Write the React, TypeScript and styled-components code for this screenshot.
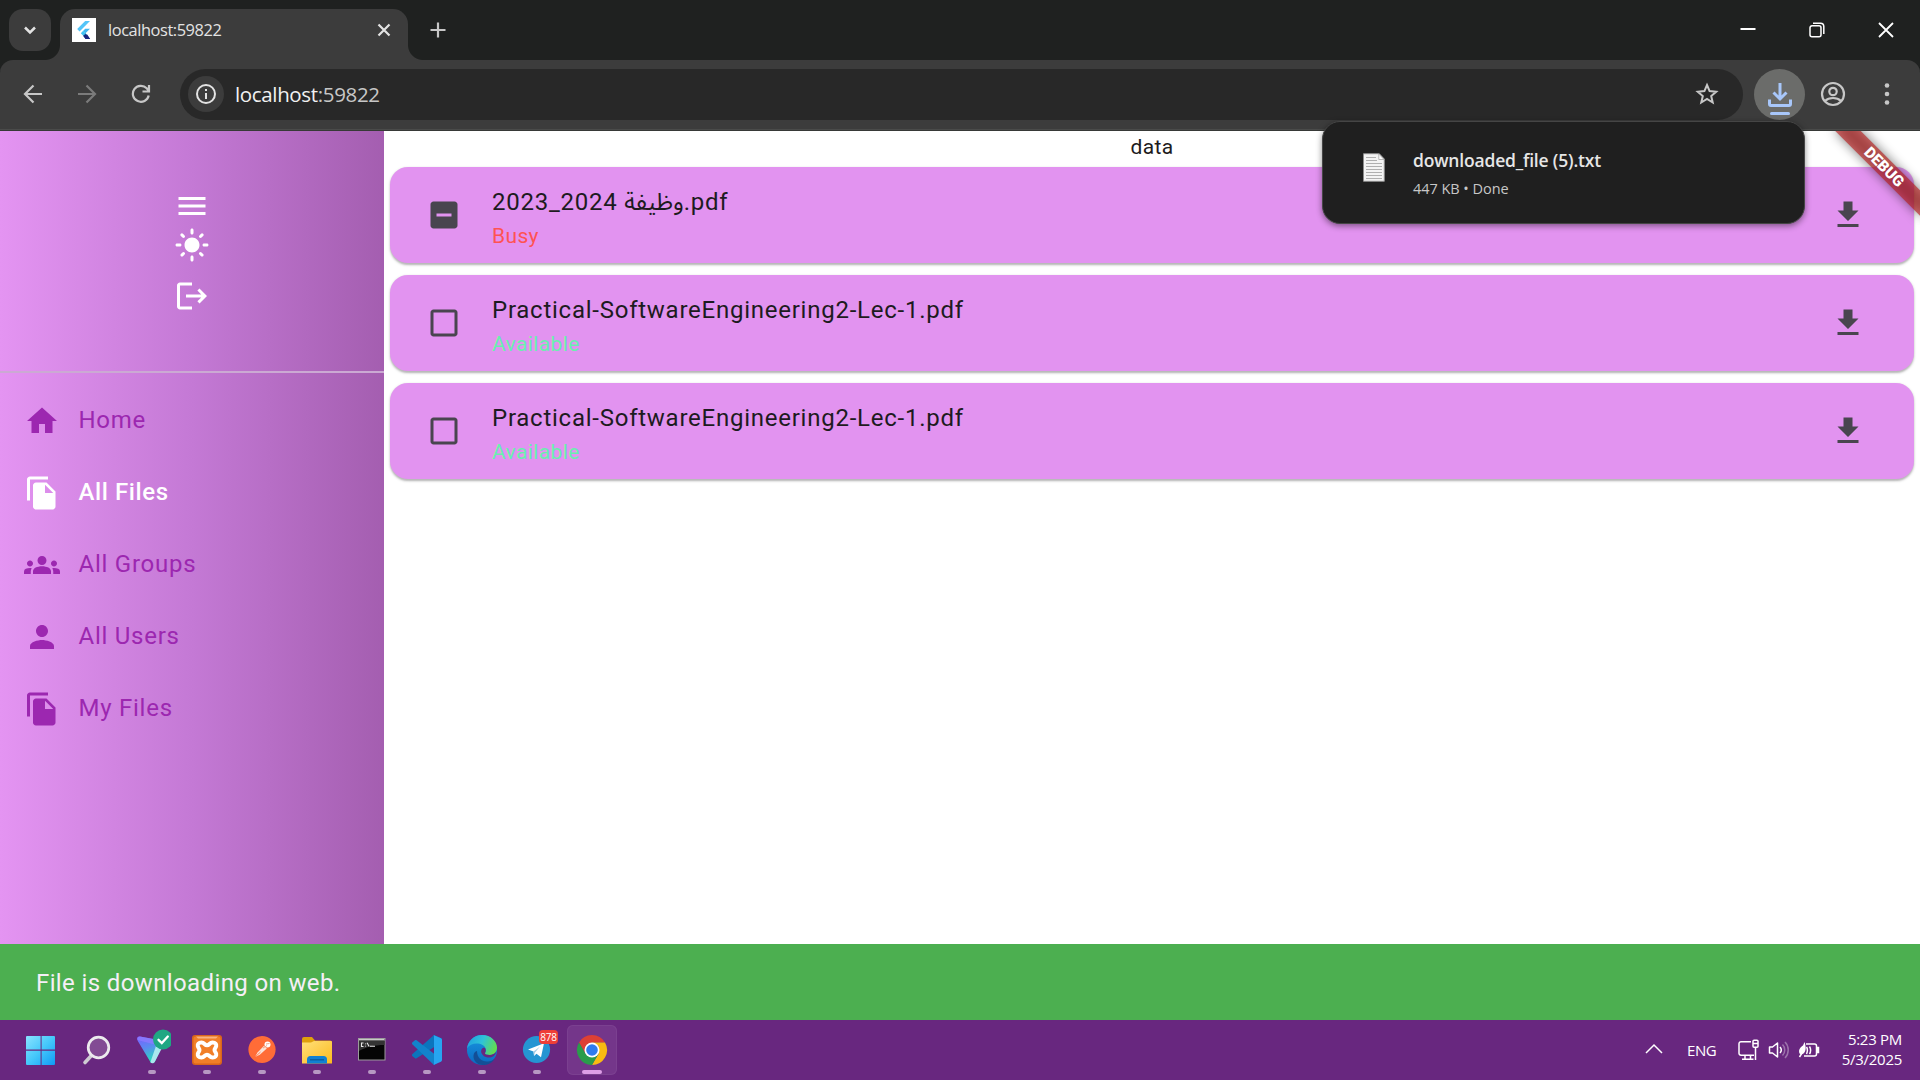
import React from "react";
import styled, { createGlobalStyle, css } from "styled-components";
import {
  MdHome,
  MdFileCopy,
  MdGroups,
  MdPerson,
  MdMenu,
  MdLightMode,
  MdLogout,
  MdCheckBoxOutlineBlank,
  MdIndeterminateCheckBox,
  MdFileDownload,
} from "react-icons/md";

const SYSTEM = `"Open Sans", "Noto Sans", sans-serif`;
const APP = `Roboto, "Noto Sans Arabic", "DejaVu Sans", sans-serif`;

const Global = createGlobalStyle`
  *, *::before, *::after { box-sizing: border-box; }
  html, body { margin: 0; padding: 0; overflow: hidden; }
  svg { display: block; flex: none; }
`;

const Screen = styled.div`
  display: flex;
  flex-direction: column;
  width: 1920px;
  height: 1080px;
  overflow: hidden;
  position: relative;
  background: #fff;
`;

/* ---------- browser chrome ---------- */

const TabStrip = styled.div`
  display: flex;
  height: 60px;
  flex: none;
  padding: 9px 0 0 9px;
  background: #1f2120;
`;

const TabSearch = styled.div`
  display: grid;
  place-items: center;
  width: 42px;
  height: 42px;
  border-radius: 14px;
  background: #3c3c3c;
`;

const Tab = styled.div`
  position: relative;
  display: flex;
  align-items: center;
  width: 348px;
  height: 51px;
  margin-left: 9px;
  padding: 0 15px 9px 12px;
  border-radius: 15px 15px 0 0;
  background: #3c3c3c;

  &::before,
  &::after {
    content: "";
    position: absolute;
    bottom: 0;
    width: 15px;
    height: 15px;
  }
  &::before {
    left: -15px;
    background: radial-gradient(circle at 0 0, transparent 14.5px, #3c3c3c 15.5px);
  }
  &::after {
    right: -15px;
    background: radial-gradient(circle at 100% 0, transparent 14.5px, #3c3c3c 15.5px);
  }
`;

const TabTitle = styled.span`
  flex: 1;
  margin-left: 12px;
  font: 400 16.4px/24px ${SYSTEM};
  letter-spacing: -0.43px;
  color: #e3e3e3;
`;

const NewTab = styled.div`
  display: grid;
  place-items: center;
  width: 42px;
  height: 42px;
  margin-left: 9px;
`;

const WindowButtons = styled.div`
  display: flex;
  height: 42px;
  margin-left: auto;
`;

const WindowButton = styled.div`
  display: grid;
  place-items: center;
  width: 69px;
  height: 42px;
`;

const ToolbarBack = styled.div`
  flex: none;
  height: 71px;
  background: #1f2120;
`;

const Toolbar = styled.div`
  display: flex;
  align-items: center;
  height: 71px;
  padding: 0 6px 2px 6px;
  border-radius: 13px 13px 0 0;
  border-bottom: 1px solid #373937;
  box-shadow: inset 0 -1px 0 #4a4b4a;
  background: #3c3c3c;
`;

const ToolButton = styled.div`
  display: grid;
  place-items: center;
  width: 54px;
  height: 51px;
`;

const AddressBar = styled.div`
  display: flex;
  align-items: center;
  width: 1563px;
  height: 51px;
  margin-left: 12px;
  padding: 0 24px 0 7.5px;
  border-radius: 26px;
  background: #282828;
`;

const SiteInfo = styled.div`
  display: grid;
  place-items: center;
  width: 36px;
  height: 36px;
  border-radius: 50%;
  background: #3c3c3c;
`;

const Url = styled.span`
  flex: 1;
  margin-left: 11.5px;
  font: 400 20.5px/30px ${SYSTEM};
  letter-spacing: -0.35px;
  color: #c7c7c7;
`;

const Host = styled.span`
  color: #f1f1f1;
`;

const DownloadsButton = styled.div`
  display: grid;
  place-items: center;
  width: 51px;
  height: 51px;
  margin: 0 1px 0 11px;
  border-radius: 50%;
  background: #6b6c6a;
`;

/* ---------- download bubble ---------- */

const Bubble = styled.div`
  position: absolute;
  left: 1322px;
  top: 121px;
  display: flex;
  align-items: flex-start;
  width: 483px;
  height: 103px;
  padding: 31px 39px 0;
  border: 1px solid #454545;
  border-radius: 18px;
  background: #1f1f1f;
  box-shadow: 0 2px 6px rgba(0, 0, 0, 0.45);
`;

const BubbleText = styled.div`
  display: flex;
  flex-direction: column;
  margin: -7px 0 0 27px;
  font-family: ${SYSTEM};
`;

const BubbleTitle = styled.div`
  font-size: 17.5px;
  font-weight: 600;
  line-height: 28px;
  letter-spacing: -0.18px;
  color: #e6e6e6;
`;

const BubbleMeta = styled.div`
  font-size: 14.5px;
  line-height: 29px;
  letter-spacing: -0.04px;
  color: #c7c7c7;
`;

/* ---------- page ---------- */

const Page = styled.div`
  position: relative;
  display: flex;
  height: 813px;
  flex: none;
  overflow: hidden;
  font-family: ${APP};
`;

const Sidebar = styled.aside`
  display: flex;
  flex-direction: column;
  width: 384px;
  flex: none;
  background: linear-gradient(90deg, #e494f2 0%, #c479d5 50%, #a45eb0 100%);
`;

const SidebarHeader = styled.div`
  display: flex;
  flex-direction: column;
  align-items: center;
  height: 242px;
  padding-top: 57px;
  border-bottom: 2px solid #cba9d3;
  color: #fff;
`;

const HeaderIcon = styled.div<{ $h: number }>`
  display: grid;
  place-items: center;
  width: 60px;
  height: ${(p) => p.$h}px;
  font-size: 36px;
`;

const NavList = styled.nav`
  display: flex;
  flex-direction: column;
  padding-top: 11px;
`;

const NavItem = styled.div<{ $active?: boolean }>`
  display: flex;
  align-items: center;
  gap: 18.5px;
  height: 72px;
  padding-left: 24px;
  font-size: 24px;
  letter-spacing: 0.75px;
  color: #9c27b0;
  ${(p) =>
    p.$active &&
    css`
      color: #fff;
      font-weight: 500;
      letter-spacing: 0.6px;
    `}
  svg {
    width: 36px;
    height: 36px;
    margin-top: 2px;
  }
`;

const Main = styled.main`
  display: flex;
  flex-direction: column;
  flex: 1;
  padding: 0 6px;
`;

const Caption = styled.div`
  height: 30px;
  font-size: 21px;
  line-height: 32px;
  letter-spacing: 0.375px;
  text-align: center;
  color: #1d1b20;
`;

const FileCard = styled.div`
  display: flex;
  align-items: center;
  height: 96px;
  margin: 6px 0;
  padding: 0 48px 0 36px;
  border-radius: 18px;
  background: #e293f0;
  box-shadow: 0 1.5px 3px rgba(0, 0, 0, 0.2), 0 1.5px 1.5px rgba(0, 0, 0, 0.12);
  color: #49454f;
  font-size: 36px;
`;

const FileText = styled.div`
  flex: 1;
  margin-left: 30px;
`;

const FileName = styled.div`
  height: 36px;
  font-size: 24px;
  line-height: 40px;
  letter-spacing: 0.75px;
  color: #1d1b20;
`;

/* Shaped apart from the Arabic word, which would otherwise cancel the letter spacing. */
const LatinPart = styled.span`
  display: inline-block;
  white-space: pre;
`;

const FileStatus = styled.div<{ $busy: boolean }>`
  height: 30px;
  font-size: 21px;
  line-height: 36px;
  letter-spacing: 0.375px;
  color: ${(p) => (p.$busy ? "#ff5252" : "#69f0ae")};
`;

const Banner = styled.div`
  position: absolute;
  right: -24px;
  top: 27px;
  width: 120px;
  height: 18px;
  transform: rotate(45deg);
  font: 900 15.3px/18px Roboto, sans-serif;
  text-align: center;
  color: #fff;

  &::before {
    content: "";
    position: absolute;
    inset: 0;
    background: rgba(0, 0, 0, 0.5);
    filter: blur(6px);
  }
`;

const BannerLabel = styled.span`
  position: absolute;
  inset: 0;
  background: rgba(183, 28, 28, 0.63);
`;

const SnackBar = styled.div`
  display: flex;
  align-items: center;
  flex: none;
  height: 76px;
  padding: 2px 36px 0;
  background: #4caf50;
  font: 400 24px/36px ${APP};
  letter-spacing: 0.375px;
  color: #f5eff7;
`;

/* ---------- taskbar ---------- */

const Taskbar = styled.div`
  display: flex;
  flex: none;
  height: 60px;
  padding: 5px 18px 5px 17px;
  background: #68277f;
  color: #fff;
  font-family: ${SYSTEM};
`;

const Slot = styled.div<{ $active?: boolean }>`
  position: relative;
  display: flex;
  flex-direction: column;
  align-items: center;
  width: 50px;
  height: 50px;
  margin-right: 5px;
  padding-top: 9px;
  border-radius: 6px;
  ${(p) =>
    p.$active &&
    css`
      background: #74368a;
      box-shadow: inset 0 0 0 1px #7b4090;
    `}
`;

const Running = styled.i<{ $active?: boolean }>`
  width: ${(p) => (p.$active ? 20 : 8)}px;
  height: 4px;
  margin-top: 4px;
  border-radius: 2px;
  background: ${(p) => (p.$active ? "#dd9de6" : "#b798c3")};
`;

const Badge = styled.span`
  position: absolute;
  left: 27px;
  top: 5px;
  width: 19px;
  height: 14px;
  border-radius: 4px;
  background: #ee3e37;
  font-size: 10px;
  line-height: 14px;
  letter-spacing: -0.2px;
  text-align: center;
`;

const Tray = styled.div`
  display: flex;
  align-items: center;
  height: 48px;
  margin-left: auto;
  font-size: 15px;
  letter-spacing: -0.28px;
`;

const Language = styled.span`
  width: 30px;
  margin: 1px 21px 0 24px;
  letter-spacing: -0.4px;
`;

const TrayIcons = styled.div`
  display: flex;
  align-items: center;
  gap: 8px;
  margin-top: 2px;
`;

const Clock = styled.div`
  display: flex;
  flex-direction: column;
  align-items: flex-end;
  width: 82px;
  line-height: 20px;
`;

/* ---------- drawings ---------- */

type StrokeProps = { size: number; d: string; color: string; w: number };

const Stroke = ({ size, d, color, w }: StrokeProps) => (
  <svg width={size} height={size} viewBox={`0 0 ${size} ${size}`} fill="none" stroke={color} strokeWidth={w}>
    <path d={d} />
  </svg>
);

const FlutterIcon = () => (
  <svg width="24" height="24" viewBox="0 0 24 24">
    <path fill="#fff" d="M0 0h24v24H0z" />
    <path fill="#54c5f8" d="M13.2 3H18L7.6 13.4 5.2 11z" />
    <path fill="#42b8f0" d="M13.2 10.8H18l-4.5 4.5-2.4-2.4z" />
    <path fill="#40c4f5" d="M8.8 15.2l2.4-2.4 2.4 2.4-2.4 2.5z" />
    <path fill="#01579b" d="M11.2 17.7l2.4-2.5 4.5 5.8h-4.5z" />
    <path fill="#1a237e" d="M11.2 17.7l4-1.2 2.9 4.5h-4.5z" />
  </svg>
);

const PaperIcon = () => (
  <svg width="24" height="29" viewBox="0 0 24 29">
    <path d="M1.500.7h15.800l5 5.300v22.300H1.500z" fill="#f4f4f4" stroke="#8d8d8d" />
    <path d="M16.800 1v5.500h5.200z" fill="#fff" stroke="#a8a8a8" strokeWidth=".8" />
    <path
      d="M4 4.500h10M4 7.500h11M4 10.500h16M4 13.500h16M4 16.500h16M4 19.500h16M4 22.500h16M4 25.500h16"
      stroke="#b0b0b0"
      strokeWidth="1.200"
    />
  </svg>
);

const StartIcon = () => (
  <svg width="32" height="32" viewBox="0 0 32 32">
    <defs>
      <linearGradient id="win" x1="0" y1="0" x2="1" y2="1" gradientUnits="objectBoundingBox">
        <stop offset="0" stopColor="#8be3ff" />
        <stop offset=".5" stopColor="#45c8fb" />
        <stop offset="1" stopColor="#0f9bf5" />
      </linearGradient>
    </defs>
    <path
      fill="url(#win)"
      d="M1 2h13.6v13.6H0V3a1 1 0 0 1 1-1zM15.6 2H28a1 1 0 0 1 1 1v12.6H15.6zM0 16.8h14.6V31H1a1 1 0 0 1-1-1zM15.6 16.8H29V30a1 1 0 0 1-1 1H15.6z"
    />
  </svg>
);

const SearchIcon = () => (
  <svg width="32" height="32" viewBox="0 0 32 32" fill="none" strokeLinecap="round">
    <path d="M10 22l-6 6.5" stroke="#cfcbd3" strokeWidth="3.6" />
    <circle cx="17.5" cy="13.5" r="10.3" fill="#824b94" stroke="#eceaee" strokeWidth="2.7" />
  </svg>
);

const ProtonSvg = styled.svg`
  margin-top: -6px;
`;

const ProtonIcon = () => (
  <ProtonSvg width="38" height="38" viewBox="0 0 38 38">
    <defs>
      <linearGradient id="pv" x1="0" y1="0" x2=".4" y2="1">
        <stop offset="0" stopColor="#7b5cff" />
        <stop offset=".5" stopColor="#5a8cf0" />
        <stop offset="1" stopColor="#25e0b8" />
      </linearGradient>
    </defs>
    <path
      fill="url(#pv)"
      d="M4.200 10.500C4.200 9 5.500 8.200 7 8.500l19 3.500 3.500 4.500-7.600 17c-1 2-3.700 2-4.800 0L4.800 13c-.4-.8-.6-1.600-.6-2.500z"
    />
    <path fill="#8d7bff" d="M4.500 12C3.800 9.500 5.200 8.200 7 8.500l17 3.200-3 4.500z" opacity=".8" />
    <path fill="#a9e8ee" d="M24 15l6 3-8 15.500c-1 2-3.300 2.300-4.600.8z" />
    <circle cx="30" cy="11.500" r="10" fill="#1fa783" />
    <path d="M25.500 11.800l3.300 3.200 6-6.500" fill="none" stroke="#fff" strokeWidth="2.300" strokeLinecap="round" />
  </ProtonSvg>
);

const XamppIcon = () => (
  <svg width="32" height="32" viewBox="0 0 32 32">
    <rect x="1" y="1" width="30" height="30" rx="3" fill="#d9651b" />
    <rect x="2.500" y="2.500" width="27" height="27" rx="2" fill="#f17f28" />
    <path d="M5 2.500h22l-2 2H7z" fill="#f8b380" />
    <path
      d="M10.500 8.500c-3 0-4 1.500-3.700 3.500.2 1.500 1.700 2.300 1.700 4s-1.500 2.500-1.700 4c-.3 2 .7 3.500 3.700 3.500s3-2.800 5.500-2.800 2.500 2.800 5.500 2.800 4-1.500 3.700-3.500c-.2-1.500-1.700-2.300-1.700-4s1.500-2.500 1.700-4c.3-2-.7-3.500-3.700-3.500s-3 2.800-5.500 2.800-2.500-2.800-5.500-2.800z"
      fill="none"
      stroke="#fff"
      strokeWidth="4"
    />
  </svg>
);

const PostmanIcon = () => (
  <svg width="32" height="32" viewBox="0 0 32 32">
    <circle cx="16" cy="15.500" r="13.600" fill="#ff6c37" />
    <path d="M9 23l2.500-4.500 6.500-6.700 2.800 2.700-7 6.300z" fill="#fbe3d8" />
    <path d="M8.500 23.500l6-5.500" stroke="#ff6c37" strokeWidth=".8" />
    <circle cx="21.500" cy="10.500" r="3" fill="#fff" />
    <path d="M20 10l3.500-.5M17 14l4-2.500" stroke="#e9926e" strokeWidth=".8" />
  </svg>
);

const ExplorerIcon = () => (
  <svg width="32" height="32" viewBox="0 0 32 32">
    <defs>
      <linearGradient id="fold" x1="0" y1="0" x2="1" y2="1">
        <stop offset="0" stopColor="#ffe07a" />
        <stop offset="1" stopColor="#fdbb1e" />
      </linearGradient>
    </defs>
    <path d="M1 5a2 2 0 0 1 2-2h8l3 3.500h15a2 2 0 0 1 2 2V16H1z" fill="#dfa00c" />
    <path d="M1 8.500h9l3-1.500h17a1 1 0 0 1 1 1v21.500H1z" fill="url(#fold)" />
    <path d="M6 29.500v-4a3.500 3.500 0 0 1 3.500-3.500h13a3.500 3.500 0 0 1 3.500 3.500v4z" fill="#1181d2" />
    <path d="M9 25.800h14" stroke="#0b5a9c" strokeWidth="1.300" />
  </svg>
);

const TerminalIcon = () => (
  <svg width="32" height="32" viewBox="0 0 32 32">
    <rect x="2.500" y="4.500" width="26.500" height="21.500" fill="#050505" stroke="#9b9b9b" />
    <path d="M3 5h25.500v1.500H3z" fill="#c9c9c9" />
    <path d="M3 7h25.500v4C18 11 10 13 3 17z" fill="#333" />
    <path
      d="M7.500 9H5.500v3.500h2M9.500 9.500v.8M9.500 11.700v.8M11 8.800l2.200 3.700M14 12.300h5"
      fill="none"
      stroke="#e8e8e8"
      strokeWidth="1.100"
    />
  </svg>
);

const CodeIcon = () => (
  <svg width="32" height="32" viewBox="0 0 32 32">
    <path d="M23 1L31 4.500V8L4.800 24.800 1.500 22.200c-.7-.6-.7-1.600 0-2.200z" fill="#0b75bd" />
    <path d="M23 31l-21.500-20.500c-.7-.6-.7-1.600 0-2.200L4 6.300c.5-.4 1.100-.4 1.600 0L26 22v7z" fill="#1283cb" />
    <path
      d="M22.500 1l7.400 3.200c.7.3 1.100.9 1.100 1.700v20.200c0 .8-.4 1.400-1.100 1.700L22.500 31c.3-.3.5-.8.5-1.500V2.500c0-.7-.2-1.200-.5-1.500z"
      fill="#27a5f0"
    />
  </svg>
);

const EdgeIcon = () => (
  <svg width="32" height="32" viewBox="0 0 32 32">
    <defs>
      <linearGradient id="edgeTop" x1="0" y1=".2" x2="1" y2=".5">
        <stop offset="0" stopColor="#1f9fe0" />
        <stop offset=".5" stopColor="#2fc3d8" />
        <stop offset="1" stopColor="#62dc50" />
      </linearGradient>
      <linearGradient id="edgeLow" x1="0" y1="0" x2="0" y2="1">
        <stop offset="0" stopColor="#1896e0" />
        <stop offset="1" stopColor="#0c69c0" />
      </linearGradient>
    </defs>
    <circle cx="16" cy="16" r="15" fill="url(#edgeLow)" />
    <path
      d="M11 17c0 7 5 11 11 10.500 2.500-.2 4.600-1 6.500-2.500C26 29 21.500 31 17 31c-6 0-10-5-9.500-9.500.3-2.500 1.500-4 3.500-4.500z"
      fill="#134f96"
    />
    <path
      d="M1 14.500C1.800 7 8 1 16 1c9 0 15 6.500 15 12.500 0 5-3.500 7.500-7.500 7.500-3 0-5-1-4.500-2 1.800-2 1.300-6-2.500-8C12 8.500 4 9 1 14.500z"
      fill="url(#edgeTop)"
    />
    <path
      d="M19 19c-.5 1 1.500 2 4.500 2 3 0 5.500-1.200 6.800-3.500-1 5-5 6.500-8.800 6-4.500-.7-7.500-5-6-8 .8-1.500 2-2 3.500-1.500 1 1.500.9 3.500 0 5z"
      fill="#68277f"
    />
  </svg>
);

const TelegramIcon = () => (
  <svg width="32" height="32" viewBox="0 0 32 32">
    <circle cx="15.500" cy="15.500" r="13.600" fill="#2595d2" />
    <path d="M7 15.500l16-6.300-3 14-4.500-3.500-2.500 2.300-.5-4.500z" fill="#fff" />
    <path d="M12.500 17.500l6.500-5-5 6-.8 3z" fill="#a9cfe6" />
  </svg>
);

const ChromeIcon = () => (
  <svg width="32" height="32" viewBox="0 0 32 32">
    <path fill="#dd4034" d="M3 8.500A15 15 0 0 1 29 8.500H16L9.500 19.800z" />
    <path fill="#f9bb12" d="M29 8.500A15 15 0 0 1 16 31l6.500-11.250L22.500 12l-6.500-3.500z" />
    <path fill="#2a9c4b" d="M3 8.500A15 15 0 0 0 16 31l6.500-11.250-13 0z" />
    <circle cx="16" cy="16" r="7.500" fill="#fff" />
    <circle cx="16" cy="16" r="5.800" fill="#2f7bee" />
  </svg>
);

const apps: { icon: () => React.ReactElement; running?: boolean; active?: boolean; badge?: string }[] = [
  { icon: StartIcon },
  { icon: SearchIcon },
  { icon: ProtonIcon, running: true },
  { icon: XamppIcon, running: true },
  { icon: PostmanIcon, running: true },
  { icon: ExplorerIcon, running: true },
  { icon: TerminalIcon, running: true },
  { icon: CodeIcon, running: true },
  { icon: EdgeIcon, running: true },
  { icon: TelegramIcon, running: true, badge: "878" },
  { icon: ChromeIcon, running: true, active: true },
];

const nav = [
  { label: "Home", icon: MdHome },
  { label: "All Files", icon: MdFileCopy, active: true },
  { label: "All Groups", icon: MdGroups },
  { label: "All Users", icon: MdPerson },
  { label: "My Files", icon: MdFileCopy },
];

const files: { name: React.ReactNode; busy: boolean }[] = [
  {
    name: (
      <>
        <LatinPart>{"2023_2024 "}</LatinPart>
        وظيفة
        <LatinPart>.pdf</LatinPart>
      </>
    ),
    busy: true,
  },
  { name: "Practical-SoftwareEngineering2-Lec-1.pdf", busy: false },
  { name: "Practical-SoftwareEngineering2-Lec-1.pdf", busy: false },
];

export default function App() {
  return (
    <Screen>
      <Global />
      <TabStrip>
        <TabSearch>
          <Stroke size={14} d="M2 4.500l5 5 5-5" color="#e3e3e3" w={2.5} />
        </TabSearch>
        <Tab>
          <FlutterIcon />
          <TabTitle>localhost:59822</TabTitle>
          <Stroke size={18} d="M3.500 3.500l11 11M14.500 3.500l-11 11" color="#e3e3e3" w={2.2} />
        </Tab>
        <NewTab>
          <Stroke size={18} d="M9 1.500v15M1.500 9h15" color="#c7c7c7" w={2.2} />
        </NewTab>
        <WindowButtons>
          <WindowButton>
            <Stroke size={16} d="M.5 7h15" color="#fff" w={2} />
          </WindowButton>
          <WindowButton>
            <Stroke
              size={16}
              d="M3.500 3.800h6.500a2 2 0 0 1 2 2v7a2 2 0 0 1-2 2H3a2 2 0 0 1-2-2v-7a2 2 0 0 1 2-2zM4 1.200h7.500a3.300 3.300 0 0 1 3.300 3.300V12"
              color="#fff"
              w={1.5}
            />
          </WindowButton>
          <WindowButton>
            <Stroke size={16} d="M1 1l14 14M15 1L1 15" color="#fff" w={1.8} />
          </WindowButton>
        </WindowButtons>
      </TabStrip>
      <ToolbarBack>
        <Toolbar>
          <ToolButton>
            <Stroke size={20} d="M19 10H2M10.500 1.500L2 10l8.500 8.500" color="#c7c7c7" w={2.2} />
          </ToolButton>
          <ToolButton>
            <Stroke size={20} d="M1 10h17M9.500 1.500L18 10l-8.500 8.500" color="#7b7b7b" w={2.2} />
          </ToolButton>
          <ToolButton>
            <Stroke size={20} d="M17.700 11.500a8 8 0 1 1-2-7.200L18 7M18 1v6.500h-6.500" color="#c7c7c7" w={2.2} />
          </ToolButton>
          <AddressBar>
            <SiteInfo>
              <svg width="22" height="22" viewBox="0 0 22 22" fill="none" stroke="#e3e3e3" strokeWidth="2">
                <circle cx="11" cy="11" r="9" />
                <path d="M11 10v6M11 6v2" />
              </svg>
            </SiteInfo>
            <Url>
              <Host>localhost</Host>:59822
            </Url>
            <Stroke
              size={24}
              d="M12 3l2.600 6.100 6.600.6-5 4.300 1.500 6.500-5.700-3.500-5.700 3.500 1.500-6.500-5-4.300 6.600-.6z"
              color="#c7c7c7"
              w={2}
            />
          </AddressBar>
          <DownloadsButton>
            <svg width="51" height="51" viewBox="0 0 51 51" fill="none" stroke="#a8c7fa" strokeWidth="3">
              <path d="M26 14v16M19.500 23.500l6.500 6.500 6.500-6.500" />
              <path d="M15.500 30.500v4.500a1.500 1.500 0 0 0 1.500 1.500h18a1.500 1.500 0 0 0 1.500-1.500v-4.500" />
              <path d="M17.500 44.500h17" strokeLinecap="round" />
            </svg>
          </DownloadsButton>
          <ToolButton>
            <svg width="26" height="26" viewBox="0 0 26 26" fill="none" stroke="#c7c7c7" strokeWidth="2.200">
              <circle cx="13" cy="13" r="11" />
              <circle cx="13" cy="10.500" r="3.700" />
              <path d="M5 20c4-4 12-4 16 0" />
            </svg>
          </ToolButton>
          <ToolButton>
            <svg width="6" height="24" viewBox="0 0 6 24" fill="#c7c7c7">
              <circle cx="3" cy="3.500" r="2.300" />
              <circle cx="3" cy="12" r="2.300" />
              <circle cx="3" cy="20.500" r="2.300" />
            </svg>
          </ToolButton>
        </Toolbar>
      </ToolbarBack>

      <Page>
        <Sidebar>
          <SidebarHeader>
            <HeaderIcon $h={36}>
              <MdMenu />
            </HeaderIcon>
            <HeaderIcon $h={42}>
              <MdLightMode />
            </HeaderIcon>
            <HeaderIcon $h={60}>
              <MdLogout />
            </HeaderIcon>
          </SidebarHeader>
          <NavList>
            {nav.map(({ label, icon: Icon, active }) => (
              <NavItem key={label} $active={active}>
                <Icon />
                {label}
              </NavItem>
            ))}
          </NavList>
        </Sidebar>
        <Main>
          <Caption>data</Caption>
          {files.map((f, i) => (
            <FileCard key={i}>
              {f.busy ? <MdIndeterminateCheckBox /> : <MdCheckBoxOutlineBlank />}
              <FileText>
                <FileName>{f.name}</FileName>
                <FileStatus $busy={f.busy}>{f.busy ? "Busy" : "Available"}</FileStatus>
              </FileText>
              <MdFileDownload />
            </FileCard>
          ))}
        </Main>
        <Banner>
          <BannerLabel>DEBUG</BannerLabel>
        </Banner>
      </Page>

      <SnackBar>File is downloading on web.</SnackBar>

      <Taskbar>
        {apps.map(({ icon: Icon, running, active, badge }, i) => (
          <Slot key={i} $active={active}>
            <Icon />
            {running && <Running $active={active} />}
            {badge && <Badge>{badge}</Badge>}
          </Slot>
        ))}
        <Tray>
          <Stroke size={18} d="M1 13l8-8 8 8" color="#fff" w={1.5} />
          <Language>ENG</Language>
          <TrayIcons>
            <svg width="22" height="22" viewBox="0 0 22 22" fill="none" stroke="#fff" strokeWidth="1.500">
              <path d="M13 2.700H3a2 2 0 0 0-2 2v9.500a2 2 0 0 0 2 2h13M7 16.500V20M12.500 16.500V20M4 20.200h11.500M17.500 9v12" />
              <rect x="15" y="1.200" width="5" height="7" rx="1" />
              <path d="M15 4.500h5" />
            </svg>
            <svg width="22" height="22" viewBox="0 0 22 22" fill="none" stroke="#fff" strokeWidth="1.500">
              <path d="M1.500 8h3L9.500 4v14l-5-4h-3z" strokeLinejoin="round" />
              <path d="M12 8c1.500 1.700 1.500 4.300 0 6" />
              <path d="M14.500 5.500c3 3 3 8 0 11M17 3c4.300 4.300 4.300 11.700 0 16" opacity=".35" />
            </svg>
            <svg width="22" height="22" viewBox="0 0 22 22" fill="none" stroke="#fff" strokeWidth="1.500">
              <path d="M8 5h8.500a2 2 0 0 1 2 2v8a2 2 0 0 1-2 2H6" />
              <path d="M19 8.500h1.500v5H19z" fill="#fff" />
              <path d="M6.500 3c1.500 4 2 9-1 11.500-1.300 1-3 .8-4 0C0 10 3 8 5 6.500z" fill="#fff" stroke="none" />
              <path d="M1.500 18L4 14M8.500 8c1.200 1.500 1.200 5 0 7M11.500 7.500c1.500 2 1.500 5.500 0 7.500" />
            </svg>
          </TrayIcons>
          <Clock>
            <span>5:23 PM</span>
            <span>5/3/2025</span>
          </Clock>
        </Tray>
      </Taskbar>

      <Bubble>
        <PaperIcon />
        <BubbleText>
          <BubbleTitle>downloaded_file (5).txt</BubbleTitle>
          <BubbleMeta>447 KB • Done</BubbleMeta>
        </BubbleText>
      </Bubble>
    </Screen>
  );
}
